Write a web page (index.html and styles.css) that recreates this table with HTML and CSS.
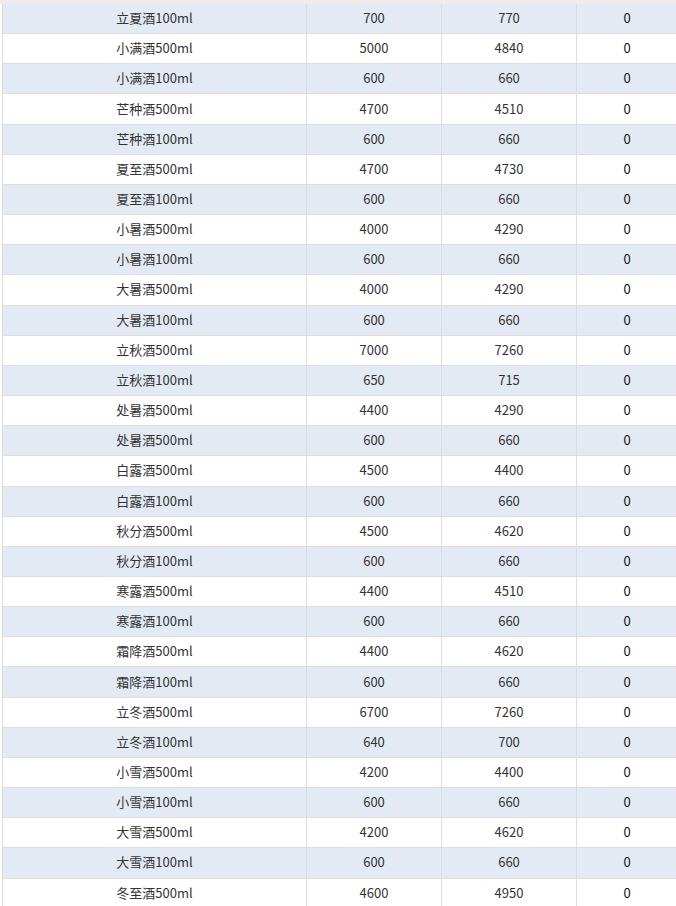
FILE: index.html
```html
<!DOCTYPE html>
<html lang="zh-CN">
<head>
<meta charset="utf-8">
<title>酒品价格表</title>
<link rel="stylesheet" href="styles.css">
</head>
<body>
<div class="topbar"></div>
<div class="wrap">
<table class="grid">
<colgroup><col class="c1"><col class="c2"><col class="c3"><col class="c4"></colgroup>
<tbody>
<tr class="alt"><td>立夏酒100ml</td><td>700</td><td>770</td><td class="z">0</td></tr>
<tr><td>小满酒500ml</td><td>5000</td><td>4840</td><td class="z">0</td></tr>
<tr class="alt"><td>小满酒100ml</td><td>600</td><td>660</td><td class="z">0</td></tr>
<tr><td>芒种酒500ml</td><td>4700</td><td>4510</td><td class="z">0</td></tr>
<tr class="alt"><td>芒种酒100ml</td><td>600</td><td>660</td><td class="z">0</td></tr>
<tr><td>夏至酒500ml</td><td>4700</td><td>4730</td><td class="z">0</td></tr>
<tr class="alt"><td>夏至酒100ml</td><td>600</td><td>660</td><td class="z">0</td></tr>
<tr><td>小暑酒500ml</td><td>4000</td><td>4290</td><td class="z">0</td></tr>
<tr class="alt"><td>小暑酒100ml</td><td>600</td><td>660</td><td class="z">0</td></tr>
<tr><td>大暑酒500ml</td><td>4000</td><td>4290</td><td class="z">0</td></tr>
<tr class="alt"><td>大暑酒100ml</td><td>600</td><td>660</td><td class="z">0</td></tr>
<tr><td>立秋酒500ml</td><td>7000</td><td>7260</td><td class="z">0</td></tr>
<tr class="alt"><td>立秋酒100ml</td><td>650</td><td>715</td><td class="z">0</td></tr>
<tr><td>处暑酒500ml</td><td>4400</td><td>4290</td><td class="z">0</td></tr>
<tr class="alt"><td>处暑酒500ml</td><td>600</td><td>660</td><td class="z">0</td></tr>
<tr><td>白露酒500ml</td><td>4500</td><td>4400</td><td class="z">0</td></tr>
<tr class="alt"><td>白露酒100ml</td><td>600</td><td>660</td><td class="z">0</td></tr>
<tr><td>秋分酒500ml</td><td>4500</td><td>4620</td><td class="z">0</td></tr>
<tr class="alt"><td>秋分酒100ml</td><td>600</td><td>660</td><td class="z">0</td></tr>
<tr><td>寒露酒500ml</td><td>4400</td><td>4510</td><td class="z">0</td></tr>
<tr class="alt"><td>寒露酒100ml</td><td>600</td><td>660</td><td class="z">0</td></tr>
<tr><td>霜降酒500ml</td><td>4400</td><td>4620</td><td class="z">0</td></tr>
<tr class="alt"><td>霜降酒100ml</td><td>600</td><td>660</td><td class="z">0</td></tr>
<tr><td>立冬酒500ml</td><td>6700</td><td>7260</td><td class="z">0</td></tr>
<tr class="alt"><td>立冬酒100ml</td><td>640</td><td>700</td><td class="z">0</td></tr>
<tr><td>小雪酒500ml</td><td>4200</td><td>4400</td><td class="z">0</td></tr>
<tr class="alt"><td>小雪酒100ml</td><td>600</td><td>660</td><td class="z">0</td></tr>
<tr><td>大雪酒500ml</td><td>4200</td><td>4620</td><td class="z">0</td></tr>
<tr class="alt"><td>大雪酒100ml</td><td>600</td><td>660</td><td class="z">0</td></tr>
<tr><td>冬至酒500ml</td><td>4600</td><td>4950</td><td class="z">0</td></tr>
</tbody>
</table>
</div>
</body>
</html>
```
FILE: styles.css
```css
html, body {
  margin: 0;
  padding: 0;
  overflow: hidden;
  background: #ffffff;
}
body {
  font-family: "Noto Sans CJK SC", "Noto Sans", sans-serif;
  font-size: 13px;
  color: #333333;
}
.topbar {
  height: 4px;
  background: #ececec;
}
.wrap {
  padding-left: 2px;
  width: 676px;
}
.grid {
  table-layout: fixed;
  border-collapse: separate;
  border-spacing: 0;
  width: 676px;
}
.c1 { width: 305px; }
.c2 { width: 135px; }
.c3 { width: 135px; }
.c4 { width: 101px; }
.grid td {
  box-sizing: border-box;
  height: 30.17px;
  padding: 0 0 1px 0;
  text-align: center;
  vertical-align: middle;
  border-right: 1px solid #dddddd;
  border-bottom: 1px solid #dddddd;
  line-height: 16px;
  white-space: nowrap;
}
.grid td:first-child {
  border-left: 1px solid #dddddd;
}
.grid tr.alt td {
  background: #e4eaf4;
}
.grid td.z {
  color: #111111;
}
```
